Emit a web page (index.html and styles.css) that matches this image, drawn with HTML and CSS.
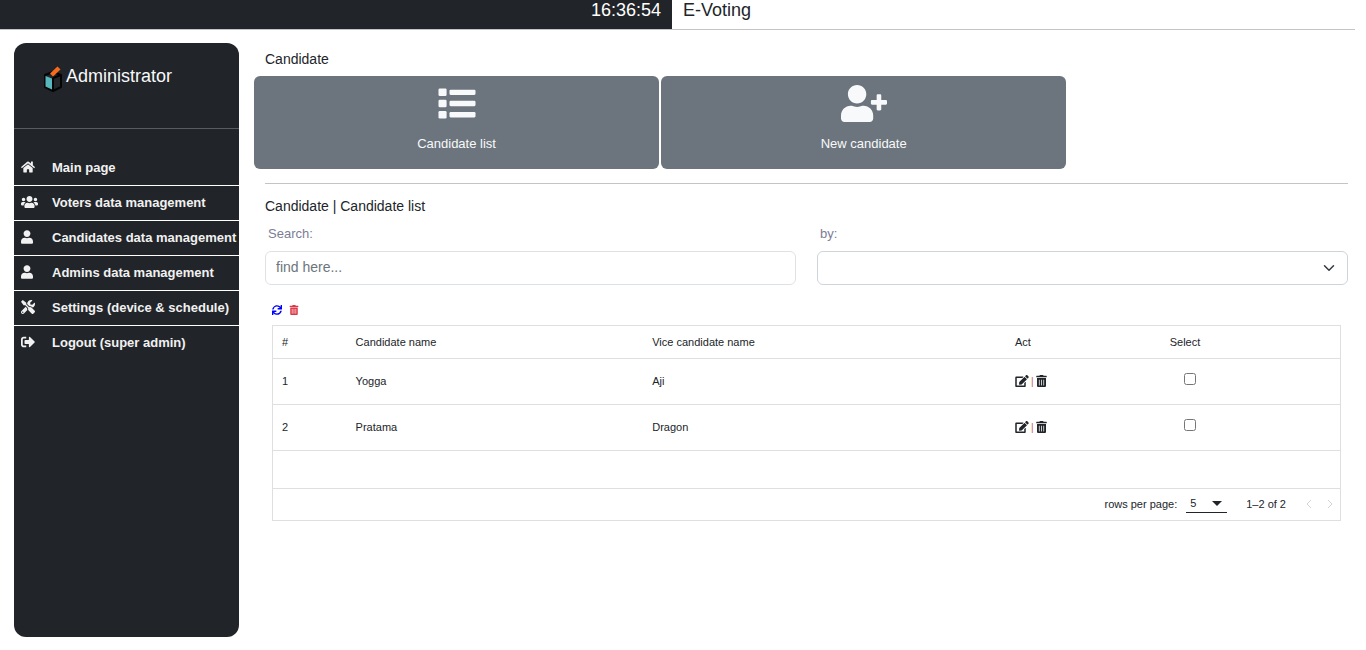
FILE: index.html
```html
<!DOCTYPE html>
<html lang="en">
<head>
<meta charset="utf-8">
<meta name="viewport" content="width=device-width, initial-scale=1">
<title>E-Voting</title>
<link rel="stylesheet" href="styles.css">
</head>
<body>
<svg class="sprite" aria-hidden="true">
  <symbol id="home" viewBox="0 0 576 512"><path d="M280.37 148.26L96 300.11V464a16 16 0 0 0 16 16l112.06-.29a16 16 0 0 0 15.92-16V368a16 16 0 0 1 16-16h64a16 16 0 0 1 16 16v95.64a16 16 0 0 0 16 16.05L464 480a16 16 0 0 0 16-16V300L295.67 148.26a12.19 12.19 0 0 0-15.3 0zM571.6 251.47L488 182.56V44.05a12 12 0 0 0-12-12h-56a12 12 0 0 0-12 12v72.61L318.47 43a48 48 0 0 0-61 0L4.34 251.47a12 12 0 0 0-1.6 16.9l25.5 31A12 12 0 0 0 45.15 301l235.22-193.74a12.19 12.19 0 0 1 15.3 0L530.9 301a12 12 0 0 0 16.9-1.6l25.5-31a12 12 0 0 0-1.7-16.93z"/></symbol>
  <symbol id="users" viewBox="0 0 640 512"><path d="M96 224c35.3 0 64-28.7 64-64s-28.7-64-64-64-64 28.7-64 64 28.7 64 64 64zm448 0c35.3 0 64-28.7 64-64s-28.7-64-64-64-64 28.7-64 64 28.7 64 64 64zm32 32h-64c-17.6 0-33.5 7.1-45.1 18.6 40.3 22.1 68.9 62 75.1 109.4h66c17.7 0 32-14.3 32-32v-32c0-35.3-28.7-64-64-64zm-256 0c61.9 0 112-50.1 112-112S381.9 32 320 32 208 82.1 208 144s50.1 112 112 112zm76.8 32h-8.3c-20.8 10-43.9 16-68.5 16s-47.6-6-68.5-16h-8.3C179.6 288 128 339.6 128 403.2V432c0 26.5 21.5 48 48 48h288c26.5 0 48-21.5 48-48v-28.8c0-63.6-51.6-115.2-115.2-115.2zm-223.7-13.4C161.5 263.1 145.6 256 128 256H64c-35.3 0-64 28.7-64 64v32c0 17.7 14.3 32 32 32h65.9c6.3-47.4 34.9-87.3 75.2-109.4z"/></symbol>
  <symbol id="user" viewBox="0 0 448 512"><path d="M224 256c70.7 0 128-57.3 128-128S294.7 0 224 0 96 57.3 96 128s57.3 128 128 128zm89.6 32h-16.7c-22.2 10.2-46.9 16-72.9 16s-50.6-5.8-72.9-16h-16.7C60.2 288 0 348.2 0 422.4V464c0 26.5 21.5 48 48 48h352c26.5 0 48-21.5 48-48v-41.6c0-74.2-60.2-134.4-134.4-134.4z"/></symbol>
  <symbol id="tools" viewBox="0 0 512 512"><path d="M501.1 395.7L384 278.6c-23.1-23.1-57.6-27.6-85.4-13.9L192 158.1V96L64 0 0 64l96 128h62.1l106.6 106.6c-13.6 27.8-9.2 62.3 13.9 85.4l117.1 117.1c14.6 14.6 38.2 14.6 52.7 0l52.7-52.7c14.5-14.6 14.5-38.2 0-52.7zM331.7 225c28.3 0 54.9 11 74.9 31l19.4 19.4c15.8-6.9 30.8-16.5 43.8-29.5 37.1-37.1 49.7-89.3 37.9-136.7-2.2-9-13.5-12.1-20.1-5.5l-74.4 74.4-67.9-11.3L334 98.9l74.4-74.4c6.6-6.6 3.4-17.9-5.7-20.2-47.4-11.7-99.6.9-136.6 37.9-28.5 28.5-41.9 66.1-41.2 103.6l82.1 82.1c8.1-1.9 16.5-2.9 24.7-2.9zm-103.9 82l-56.7-56.7L18.7 402.8c-25 25-25 65.5 0 90.5s65.5 25 90.5 0l123.6-123.6c-7.6-19.9-9.9-41.6-5-62.7zM64 472c-13.2 0-24-10.8-24-24 0-13.3 10.7-24 24-24s24 10.7 24 24c0 13.2-10.7 24-24 24z"/></symbol>
  <symbol id="logout" viewBox="0 0 512 512"><path d="M497 273L329 441c-15 15-41 4.5-41-17v-96H152c-13.3 0-24-10.7-24-24v-96c0-13.3 10.7-24 24-24h136V88c0-21.4 25.9-32 41-17l168 168c9.3 9.4 9.3 24.6 0 34zM192 436v-40c0-6.6-5.4-12-12-12H96c-17.7 0-32-14.3-32-32V160c0-17.7 14.3-32 32-32h84c6.6 0 12-5.4 12-12V76c0-6.6-5.4-12-12-12H96c-53 0-96 43-96 96v192c0 53 43 96 96 96h84c6.6 0 12-5.4 12-12z"/></symbol>
  <symbol id="list" viewBox="0 0 512 512"><rect x="0" y="48" width="112" height="104" rx="18"/><rect x="0" y="204" width="112" height="104" rx="18"/><rect x="0" y="360" width="112" height="104" rx="18"/><rect x="152" y="64" width="360" height="74" rx="16"/><rect x="152" y="219" width="360" height="74" rx="16"/><rect x="152" y="374" width="360" height="74" rx="16"/></symbol>
  <symbol id="user-plus" viewBox="0 0 640 512"><path d="M224 256c70.7 0 128-57.3 128-128S294.7 0 224 0 96 57.3 96 128s57.3 128 128 128zm89.6 32h-16.7c-22.2 10.2-46.9 16-72.9 16s-50.6-5.8-72.9-16h-16.7C60.2 288 0 348.2 0 422.4V464c0 26.5 21.5 48 48 48h352c26.5 0 48-21.5 48-48v-41.6c0-74.2-60.2-134.4-134.4-134.4z"/><path d="M624 208h-64v-64c0-8.8-7.2-16-16-16h-32c-8.8 0-16 7.2-16 16v64h-64c-8.8 0-16 7.2-16 16v32c0 8.8 7.2 16 16 16h64v64c0 8.8 7.2 16 16 16h32c8.8 0 16-7.2 16-16v-64h64c8.8 0 16-7.2 16-16v-32c0-8.8-7.2-16-16-16z"/></symbol>
  <symbol id="sync" viewBox="0 0 512 512"><path d="M440.65 12.57l4 82.77A247.16 247.16 0 0 0 255.83 8C134.73 8 33.91 94.92 12.29 209.82A12 12 0 0 0 24.09 224h49.05a12 12 0 0 0 11.67-9.26 175.91 175.91 0 0 1 317-56.94l-101.46-4.86a12 12 0 0 0-12.57 12v47.41a12 12 0 0 0 12 12H500a12 12 0 0 0 12-12V12a12 12 0 0 0-12-12h-47.37a12 12 0 0 0-11.98 12.57zM255.83 432a175.61 175.61 0 0 1-146-77.8l101.8 4.87a12 12 0 0 0 12.57-12v-47.4a12 12 0 0 0-12-12H12a12 12 0 0 0-12 12V500a12 12 0 0 0 12 12h47.35a12 12 0 0 0 12-12.6l-4.15-82.57A247.17 247.17 0 0 0 255.83 504c121.11 0 221.93-86.92 243.55-201.82a12 12 0 0 0-11.8-14.18h-49.05a12 12 0 0 0-11.67 9.26A175.86 175.86 0 0 1 255.83 432z"/></symbol>
  <symbol id="trash" viewBox="0 0 448 512"><path d="M32 464a48 48 0 0 0 48 48h288a48 48 0 0 0 48-48V128H32zm272-256a16 16 0 0 1 32 0v224a16 16 0 0 1-32 0zm-96 0a16 16 0 0 1 32 0v224a16 16 0 0 1-32 0zm-96 0a16 16 0 0 1 32 0v224a16 16 0 0 1-32 0zM432 32H312l-9.4-18.7A24 24 0 0 0 281.1 0H166.8a23.7 23.7 0 0 0-21.4 13.3L136 32H16A16 16 0 0 0 0 48v32a16 16 0 0 0 16 16h416a16 16 0 0 0 16-16V48a16 16 0 0 0-16-16z"/></symbol>
  <symbol id="edit" viewBox="0 0 576 512"><path d="M402.6 83.2l90.2 90.2c3.8 3.8 3.8 10 0 13.8L274.4 405.6l-92.8 10.3c-12.4 1.4-22.9-9.1-21.5-21.5l10.3-92.8L388.8 83.2c3.8-3.8 10-3.8 13.8 0zm162-22.9l-48.8-48.8c-15.2-15.2-39.9-15.2-55.2 0l-35.4 35.4c-3.8 3.8-3.8 10 0 13.8l90.2 90.2c3.8 3.8 10 3.8 13.8 0l35.4-35.4c15.2-15.3 15.2-40 0-55.2zM384 346.2V448H64V128h229.8c3.2 0 6.2-1.3 8.5-3.5l40-40c7.6-7.6 2.2-20.5-8.5-20.5H48C21.5 64 0 85.5 0 112v352c0 26.5 21.5 48 48 48h352c26.5 0 48-21.5 48-48V306.2c0-10.7-12.9-16-20.5-8.5l-40 40c-2.2 2.3-3.5 5.3-3.5 8.5z"/></symbol>
</svg>

<header class="topbar">
  <div class="clock">16:36:54</div>
  <div class="app-name">E-Voting</div>
</header>

<div class="layout">
  <aside class="sidebar">
    <div class="brand">
      <svg class="logo" viewBox="0 0 20 28" aria-hidden="true">
        <path d="M10 7L2 10v12l8 4 8-4V10z" fill="#22262a" stroke="#050505" stroke-width="2" stroke-linejoin="round"/>
        <path d="M10 13l8-3M10 13v12" stroke="#050505" stroke-width="2" fill="none"/>
        <path d="M2.5 11l6.5 2.500v11l-6.500-3z" fill="#58b6bd"/>
        <path d="M7 8.500L14.500 1.500l3 3-7.500 7z" fill="#f96b1c"/>
      </svg>
      <span>Administrator</span>
    </div>
    <nav class="menu" aria-label="Main menu">
      <a href="#"><svg class="menu-icon"><use href="#home"/></svg>Main page</a>
      <a href="#"><svg class="menu-icon wide"><use href="#users"/></svg>Voters data management</a>
      <a href="#"><svg class="menu-icon narrow"><use href="#user"/></svg>Candidates data management</a>
      <a href="#"><svg class="menu-icon narrow"><use href="#user"/></svg>Admins data management</a>
      <a href="#"><svg class="menu-icon"><use href="#tools"/></svg>Settings (device &amp; schedule)</a>
      <a href="#"><svg class="menu-icon"><use href="#logout"/></svg>Logout (super admin)</a>
    </nav>
  </aside>

  <main class="content">
    <h1 class="heading">Candidate</h1>
    <div class="tiles">
      <button class="tile" type="button"><svg class="tile-icon"><use href="#list"/></svg>Candidate list</button>
      <button class="tile" type="button"><svg class="tile-icon"><use href="#user-plus"/></svg>New candidate</button>
    </div>
    <hr class="rule">
    <h2 class="heading">Candidate | Candidate list</h2>
    <form class="filters">
      <div class="field">
        <label for="search">Search:</label>
        <input id="search" class="control" type="text" placeholder="find here...">
      </div>
      <div class="field">
        <label for="by">by:</label>
        <div class="select-wrap">
          <select id="by" class="control select"><option></option></select>
          <svg class="chevron" viewBox="0 0 16 16" aria-hidden="true"><path d="M2 5l6 6 6-6"/></svg>
        </div>
      </div>
    </form>

    <section class="data">
      <div class="tools">
        <button class="icon-btn refresh" type="button" aria-label="Refresh"><svg><use href="#sync"/></svg></button>
        <button class="icon-btn remove" type="button" aria-label="Delete selected"><svg><use href="#trash"/></svg></button>
      </div>
      <div class="grid-box">
        <table class="table">
          <thead>
            <tr><th class="col-no">#</th><th class="col-name">Candidate name</th><th class="col-vice">Vice candidate name</th><th class="col-act">Act</th><th>Select</th></tr>
          </thead>
          <tbody>
            <tr>
              <td>1</td><td>Yogga</td><td>Aji</td>
              <td><div class="actions"><button class="icon-btn edit" type="button" aria-label="Edit Yogga"><svg><use href="#edit"/></svg></button><span class="bar">|</span><button class="icon-btn" type="button" aria-label="Delete Yogga"><svg><use href="#trash"/></svg></button></div></td>
              <td><input class="check" type="checkbox" aria-label="Select Yogga"></td>
            </tr>
            <tr>
              <td>2</td><td>Pratama</td><td>Dragon</td>
              <td><div class="actions"><button class="icon-btn edit" type="button" aria-label="Edit Pratama"><svg><use href="#edit"/></svg></button><span class="bar">|</span><button class="icon-btn" type="button" aria-label="Delete Pratama"><svg><use href="#trash"/></svg></button></div></td>
              <td><input class="check" type="checkbox" aria-label="Select Pratama"></td>
            </tr>
            <tr class="empty"><td colspan="5"></td></tr>
          </tbody>
        </table>
        <div class="pager">
          <label for="rows">rows per page:</label>
          <div class="rows-wrap">
            <select id="rows" class="rows"><option>5</option></select>
            <svg class="caret" viewBox="0 0 10 5" aria-hidden="true"><path d="M0 0h10L5 5z"/></svg>
          </div>
          <span class="range">1–2 of 2</span>
          <button class="page-btn" type="button" aria-label="Previous page" disabled><svg viewBox="0 0 6 10"><path d="M5 1L1 5l4 4"/></svg></button>
          <button class="page-btn" type="button" aria-label="Next page" disabled><svg viewBox="0 0 6 10"><path d="M1 1l4 4-4 4"/></svg></button>
        </div>
      </div>
    </section>
  </main>
</div>
</body>
</html>
```

FILE: styles.css
```css
* { box-sizing: border-box; }

body {
  margin: 0;
  background: #fff;
  color: #212529;
  font-family: Arial, "Liberation Sans", sans-serif;
  font-size: 14px;
}

button, input, select { font: inherit; color: inherit; }
svg { fill: currentColor; }
.sprite { display: none; }

.topbar {
  display: flex;
  height: 30px;
  margin-right: 11px;
  border-bottom: 1px solid #c4c4c6;
  font-size: 18px;
  line-height: 20px;
}
.clock {
  width: 49.6%;
  padding-right: 11px;
  background: #212529;
  color: #fff;
  text-align: right;
}
.app-name { padding-left: 11px; }

.layout {
  display: flex;
  align-items: flex-start;
  gap: 26px;
  padding: 13px 18px 13px 14px;
}

.sidebar {
  flex: 0 0 225px;
  min-height: calc(100vh - 56px);
  border-radius: 12px;
  background: #212529;
  color: #f8f9fa;
}
.brand {
  display: flex;
  gap: 3px;
  height: 86px;
  padding: 22px 0 0 29px;
  border-bottom: 1px solid #565c5f;
  font-size: 18px;
  line-height: 22px;
}
.logo { width: 20px; height: 28px; }
.menu { padding-top: 22px; }
.menu a {
  display: flex;
  align-items: center;
  height: 35px;
  padding: 0 0 2px 7px;
  border-bottom: 1px solid #fff;
  color: #f1f1f1;
  font-size: 13px;
  font-weight: bold;
  white-space: nowrap;
  text-decoration: none;
}
.menu a:last-child { border-bottom-color: transparent; }
.menu-icon { width: 14px; height: 14px; margin-right: 17px; overflow: visible; }
.menu-icon.wide { width: 17px; margin-right: 14px; }
.menu-icon.narrow { width: 12px; margin-right: 19px; }

.content { flex: 1; min-width: 0; padding-top: 7px; }
.heading { margin: 0; font-size: 14px; line-height: 18px; font-weight: normal; }
.tiles {
  display: grid;
  grid-template-columns: 1fr 1fr;
  gap: 2px;
  width: 75%;
  margin: 8px 0 14px -11px;
}
.tile {
  display: flex;
  flex-direction: column;
  align-items: center;
  gap: 14px;
  height: 93px;
  padding: 9px 0 0;
  border: 0;
  border-radius: 6px;
  background: #6c757d;
  color: #f8f9fa;
  font-size: 13px;
}
.tile-icon { width: 46px; height: 37px; }
.rule { margin: 0 0 13px; border: 0; border-top: 1px solid #c4c4c6; }

.filters { display: grid; grid-template-columns: 1fr 1fr; gap: 21px; }
.field label {
  display: block;
  padding: 10px 0 8px 3px;
  color: #7c7c96;
  font-size: 13px;
  line-height: 18px;
}
.control {
  display: block;
  width: 100%;
  height: 34px;
  padding: 0 10px 2px;
  border: 1px solid #dee2e6;
  border-radius: 6px;
  background: #fff;
}
.control::placeholder { color: #6c757d; opacity: 1; }
.select { border-color: #ced4da; appearance: none; }
.select-wrap, .rows-wrap { position: relative; }
.chevron {
  position: absolute;
  top: 11px;
  right: 13px;
  width: 12px;
  height: 12px;
  fill: none;
  stroke: #343a40;
  stroke-width: 2;
  stroke-linecap: round;
  stroke-linejoin: round;
  pointer-events: none;
}

.data { padding: 20px 7px 0; font-size: 11px; }
.tools { display: flex; gap: 7px; height: 20px; }
.icon-btn { display: flex; padding: 0; border: 0; background: none; }
.icon-btn svg { width: 11px; height: 12px; }
.icon-btn.edit svg { width: 14px; height: 12px; }
.tools .icon-btn { align-self: flex-start; }
.tools .icon-btn svg { width: 10px; height: 10px; }
.refresh { color: #00f; }
.remove { color: #dc3545; }

.grid-box { border: 1px solid #dfdfdf; }
.table { width: 100%; border-collapse: collapse; table-layout: fixed; }
.table th, .table td {
  height: 46px;
  padding: 0 9px;
  border-bottom: 1px solid #dfdfdf;
  text-align: left;
  font-weight: normal;
}
.table th { height: 32px; }
.table .empty td { height: 38px; }
.col-no { width: 6.9%; }
.col-name { width: 27.8%; }
.col-vice { width: 34%; }
.col-act { width: 14.5%; }
.actions { display: flex; align-items: center; gap: 2px; }
.bar { color: #c0603a; font-size: 10px; }
.check { display: block; width: 12px; height: 12px; margin: 0 0 4px 14px; }

.pager {
  display: flex;
  align-items: center;
  justify-content: flex-end;
  height: 31px;
  padding-right: 7px;
}
.rows-wrap { width: 41px; margin: 0 19px 0 9px; }
.rows {
  display: block;
  width: 100%;
  height: 18px;
  padding: 0 0 2px 4px;
  border: 0;
  border-bottom: 1px solid #212529;
  border-radius: 0;
  background: none;
  appearance: none;
}
.caret { position: absolute; top: 6px; right: 5px; width: 10px; height: 5px; pointer-events: none; }
.range { margin-right: 20px; }
.page-btn { display: flex; padding: 0; border: 0; background: none; }
.page-btn + .page-btn { margin-left: 15px; }
.page-btn svg { width: 6px; height: 10px; fill: none; stroke: #d5d5d5; }
```
